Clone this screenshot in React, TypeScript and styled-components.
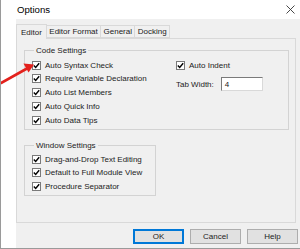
import React from 'react';
import styled, { createGlobalStyle } from 'styled-components';

const GlobalStyle = createGlobalStyle`
  html, body {
    margin: 0;
    padding: 0;
    background: #ffffff;
  }
  body {
    font-family: "Liberation Sans", Arial, sans-serif;
    font-size: 8px;
    color: #222;
  }
`;

const Window = styled.div`
  position: relative;
  width: 300px;
  height: 249px;
  box-sizing: border-box;
  background: #ffffff;
  border-left: 1px solid #9a9a9a;
  border-bottom: 1px solid #9a9a9a;
  display: flex;
  flex-direction: column;
  overflow: hidden;
`;

const TitleBar = styled.div`
  height: 19px;
  flex: none;
  display: flex;
  align-items: center;
  justify-content: space-between;
  padding: 0 5px 0 16px;
`;

const Title = styled.span`
  font-size: 9.6px;
  color: #000;
`;

const Body = styled.div`
  flex: 1;
  margin-left: 15px;
  background: #f0f0f0;
  display: flex;
  flex-direction: column;
  padding: 5px 4px 0 0;
`;

const TabStrip = styled.div`
  display: flex;
  align-items: flex-end;
  height: 14px;
  position: relative;
  z-index: 1;
`;

const Tab = styled.div<{ $active?: boolean }>`
  box-sizing: border-box;
  height: ${(p) => (p.$active ? 15 : 13)}px;
  margin-bottom: ${(p) => (p.$active ? -1 : 0)}px;
  padding: 0 ${(p) => (p.$active ? 4 : 2.4)}px;
  display: flex;
  align-items: center;
  white-space: nowrap;
  border: 1px solid #d9d9d9;
  border-bottom: ${(p) => (p.$active ? 'none' : '1px solid #d9d9d9')};
  border-left: ${(p) => (p.$active ? '1px solid #d9d9d9' : 'none')};
  background: #f0f0f0;
`;

const Panel = styled.div`
  height: 185px;
  box-sizing: border-box;
  border: 1px solid #d9d9d9;
  padding: 7px 7px 0 7px;
  display: flex;
  flex-direction: column;
  gap: 11px;
`;

const Frame = styled.fieldset<{ $w: number; $h: number; $top: number }>`
  margin: 0;
  box-sizing: border-box;
  width: ${(p) => p.$w}px;
  height: ${(p) => p.$h}px;
  border: 1px solid #d3d3d3;
  padding: ${(p) => p.$top}px 7px 0 7px;
  min-width: 0;
`;

const Legend = styled.legend`
  padding: 0 2px;
  margin-left: 2px;
  font-size: 8px;
`;

const CodeGrid = styled.div`
  display: flex;
  justify-content: space-between;
  padding-right: 17px;
`;

const Column = styled.div`
  display: flex;
  flex-direction: column;
  gap: 3.8px;
`;

const RightColumn = styled(Column)`
  width: 88px;
  gap: 7px;
`;

const CheckRow = styled.label`
  display: flex;
  align-items: center;
  height: 10px;
  gap: 4px;
  white-space: nowrap;
`;

const Box = styled.span`
  width: 9px;
  height: 9px;
  box-sizing: border-box;
  border: 1px solid #7a7a7a;
  background: #ffffff;
  display: inline-flex;
  align-items: center;
  justify-content: center;
  flex: none;
`;

const FieldRow = styled.div`
  display: flex;
  align-items: center;
  gap: 7px;
  white-space: nowrap;
`;

const NumberInput = styled.div`
  flex: none;
  width: 42px;
  height: 14px;
  box-sizing: border-box;
  border: 1px solid #7a7a7a;
  border-right-color: #d9d9d9;
  border-bottom-color: #d9d9d9;
  background: #ffffff;
  padding: 0 3px;
  display: flex;
  align-items: center;
`;

const Footer = styled.div`
  display: flex;
  justify-content: flex-end;
  gap: 6px;
  padding-top: 6px;
  margin-right: -2px;
`;

const Button = styled.button<{ $primary?: boolean }>`
  width: 51px;
  height: 15px;
  box-sizing: border-box;
  padding: 0;
  font-family: "Liberation Sans", Arial, sans-serif;
  font-size: 8px;
  color: #222;
  background: #e1e1e1;
  border: ${(p) => (p.$primary ? '2px solid #0078d7' : '1px solid #adadad')};
`;

const Annotation = styled.svg`
  position: absolute;
  left: 0;
  top: 0;
  pointer-events: none;
`;

const Check: React.FC<{ label: string }> = ({ label }) => (
  <CheckRow>
    <Box>
      <svg width="7" height="7" viewBox="0 0 7 7">
        <path d="M0.8 3.4 L2.7 5.4 L6.2 1.2" fill="none" stroke="#000" strokeWidth="1.4" />
      </svg>
    </Box>
    {label}
  </CheckRow>
);

const App: React.FC = () => {
  return (
    <>
      <GlobalStyle />
      <Window>
        <TitleBar>
          <Title>Options</Title>
          <svg width="9" height="9" viewBox="0 0 9 9">
            <path d="M0.5 0.5 L8.5 8.5 M8.5 0.5 L0.5 8.5" stroke="#333" strokeWidth="0.9" />
          </svg>
        </TitleBar>
        <Body>
          <TabStrip>
            <Tab $active>Editor</Tab>
            <Tab>Editor Format</Tab>
            <Tab>General</Tab>
            <Tab>Docking</Tab>
          </TabStrip>
          <Panel>
            <Frame $w={265} $h={84} $top={5}>
              <Legend>Code Settings</Legend>
              <CodeGrid>
                <Column>
                  <Check label="Auto Syntax Check" />
                  <Check label="Require Variable Declaration" />
                  <Check label="Auto List Members" />
                  <Check label="Auto Quick Info" />
                  <Check label="Auto Data Tips" />
                </Column>
                <RightColumn>
                  <Check label="Auto Indent" />
                  <FieldRow>
                    Tab Width:
                    <NumberInput>4</NumberInput>
                  </FieldRow>
                </RightColumn>
              </CodeGrid>
            </Frame>
            <Frame $w={132} $h={55} $top={4}>
              <Legend>Window Settings</Legend>
              <Column>
                <Check label="Drag-and-Drop Text Editing" />
                <Check label="Default to Full Module View" />
                <Check label="Procedure Separator" />
              </Column>
            </Frame>
          </Panel>
          <Footer>
            <Button $primary>OK</Button>
            <Button>Cancel</Button>
            <Button>Help</Button>
          </Footer>
        </Body>
        <Annotation width="300" height="249" viewBox="0 0 300 249">
          <path d="M0 83 L26 68.5" stroke="#e3211c" strokeWidth="2.6" strokeLinecap="round" />
          <path d="M33 64.5 L22.5 63.5 L27.5 72.5 Z" fill="#e3211c" />
        </Annotation>
      </Window>
    </>
  );
};

export default App;
